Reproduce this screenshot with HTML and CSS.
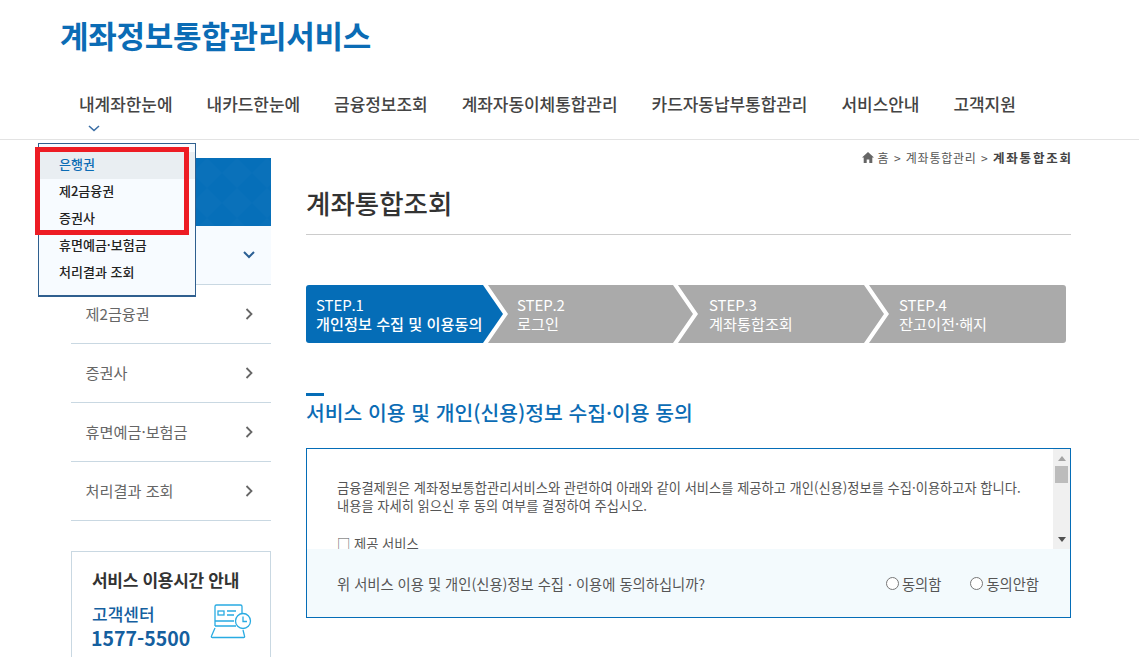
FILE: index.html
```html
<!DOCTYPE html>
<html lang="ko">
<head>
<meta charset="utf-8">
<title>계좌정보통합관리서비스</title>
<link rel="stylesheet" href="styles.css">
</head>
<body>
<header class="header">
  <div class="logo">계좌정보통합관리서비스</div>
  <nav class="gnb">
    <a class="gnb-item">내계좌한눈에</a>
    <a class="gnb-item">내카드한눈에</a>
    <a class="gnb-item">금융정보조회</a>
    <a class="gnb-item">계좌자동이체통합관리</a>
    <a class="gnb-item">카드자동납부통합관리</a>
    <a class="gnb-item">서비스안내</a>
    <a class="gnb-item">고객지원</a>
    <svg class="gnb-caret" width="12" height="7" viewBox="0 0 12 7"><path d="M1 1l5 4.5L11 1" fill="none" stroke="#3a6ea5" stroke-width="1.6"/></svg>
  </nav>
</header>
<div class="dropdown">
  <a class="dd-item dd-on">은행권</a>
  <a class="dd-item">제2금융권</a>
  <a class="dd-item">증권사</a>
  <a class="dd-item">휴면예금·보험금</a>
  <a class="dd-item">처리결과 조회</a>
</div>
<div class="redbox"></div>
<div class="body">
  <aside class="side">
    <svg class="side-head" width="200" height="68" viewBox="0 0 200 68">
      <defs>
        <pattern id="tri" width="30" height="30" patternUnits="userSpaceOnUse" x="1" y="0">
          <path d="M15 0L30 15 15 30 0 15z" fill="#fff" fill-opacity=".015"/>
        </pattern>
      </defs>
      <rect width="200" height="68" fill="#066fb9"/>
      <rect width="200" height="68" fill="url(#tri)"/>
    </svg>
    <ul class="side-list">
      <li class="side-item side-on"><span>은행권</span><svg width="12" height="8" viewBox="0 0 12 8"><path d="M1 1l5 5 5-5" fill="none" stroke="#2b5f94" stroke-width="2"/></svg></li>
      <li class="side-item"><span>제2금융권</span><svg width="8" height="12" viewBox="0 0 8 12"><path d="M1.500 1l5 5-5 5" fill="none" stroke="#666" stroke-width="1.800"/></svg></li>
      <li class="side-item"><span>증권사</span><svg width="8" height="12" viewBox="0 0 8 12"><path d="M1.500 1l5 5-5 5" fill="none" stroke="#666" stroke-width="1.800"/></svg></li>
      <li class="side-item"><span>휴면예금·보험금</span><svg width="8" height="12" viewBox="0 0 8 12"><path d="M1.500 1l5 5-5 5" fill="none" stroke="#666" stroke-width="1.800"/></svg></li>
      <li class="side-item"><span>처리결과 조회</span><svg width="8" height="12" viewBox="0 0 8 12"><path d="M1.500 1l5 5-5 5" fill="none" stroke="#666" stroke-width="1.800"/></svg></li>
    </ul>
    <div class="hours">
      <div class="hours-title">서비스 이용시간 안내</div>
      <div class="hours-row">
        <div>
          <div class="hours-label">고객센터</div>
          <div class="hours-tel">1577-5500</div>
        </div>
        <svg width="42" height="36" viewBox="0 0 42 36" fill="none" stroke="#29abe2" stroke-width="1.300"><path d="M5 23V3.500A1.500 1.500 0 0 1 6.500 2h24A1.500 1.500 0 0 1 32 3.500V10"/><rect x="8" y="8" width="6" height="4"/><path d="M17 8h9M17 12h7M5 18h19M5 23h21"/><path d="M5 25L1.500 33a1 1 0 0 0 1 1.500h31a1 1 0 0 0 1-1.500L33 27"/><circle cx="33" cy="18" r="7.500" fill="#fff"/><path d="M33 13.500V18.500h4"/></svg>
      </div>
    </div>
  </aside>
  <main class="main">
    <div class="crumb">
      <svg class="crumb-home" width="12" height="11" viewBox="0 0 12 11"><path d="M6 0L0 5.500h1.700V11h3V7.500h2.600V11h3V5.500H12z" fill="#666"/></svg>
      <span>홈</span><span class="crumb-sep">&gt;</span><span>계좌통합관리</span><span class="crumb-sep">&gt;</span><b>계좌통합조회</b>
    </div>
    <h1 class="page-title">계좌통합조회</h1>
    <ol class="steps">
      <li class="step step-first step-on"><span class="step-no">STEP.1</span><span>개인정보 수집 및 이용동의</span></li>
      <li class="step step-two"><span class="step-no">STEP.2</span><span>로그인</span></li>
      <li class="step step-three"><span class="step-no">STEP.3</span><span>계좌통합조회</span></li>
      <li class="step step-last"><span class="step-no">STEP.4</span><span>잔고이전·해지</span></li>
    </ol>
    <h2 class="section-title">서비스 이용 및 개인(신용)정보 수집·이용 동의</h2>
    <section class="agree">
      <div class="agree-scroll">
        <div class="agree-text">
          <p>금융결제원은 계좌정보통합관리서비스와 관련하여 아래와 같이 서비스를 제공하고 개인(신용)정보를 수집·이용하고자 합니다.<br>내용을 자세히 읽으신 후 동의 여부를 결정하여 주십시오.</p>
          <p class="agree-sub">□ 제공 서비스</p>
        </div>
        <div class="bar">
          <i class="bar-up"></i>
          <i class="bar-thumb"></i>
          <i class="bar-down"></i>
        </div>
      </div>
      <div class="agree-foot">
        <span class="agree-q">위 서비스 이용 및 개인(신용)정보 수집 · 이용에 동의하십니까?</span>
        <label class="radio"><i></i>동의함</label>
        <label class="radio"><i></i>동의안함</label>
      </div>
    </section>
  </main>
</div>
</body>
</html>
```
FILE: styles.css
```css
* { box-sizing: border-box; }
html, body { margin: 0; padding: 0; }
body { height: 657px; overflow: hidden; position: relative; background: #fff; color: #333; font-family: "Noto Sans CJK KR", "Noto Sans", sans-serif; }
a { color: inherit; text-decoration: none; }
ul, ol { list-style: none; margin: 0; padding: 0; }
.header { height: 140px; border-bottom: 1px solid #e3e3e3; padding: 14px 0 0 60px; }
.logo { font-size: 31px; line-height: 42px; font-weight: 700; color: #0b6cb5; letter-spacing: -.25px; }
.gnb { position: relative; display: flex; gap: 34px; padding: 33px 0 0 19px; }
.gnb-item { font-size: 17px; line-height: 30px; color: #444; font-weight: 500; letter-spacing: -.05px; }
.gnb-caret { position: absolute; left: 28px; top: 69px; }
.dropdown { position: absolute; left: 38px; top: 143px; width: 158px; height: 154px; border: 1px solid #2f5f8f; border-bottom-width: 2px; background: #f7fbff; padding-top: 8px; z-index: 2; }
.dd-item { display: block; height: 27px; line-height: 23px; padding-left: 20px; font-size: 13px; font-weight: 500; color: #222; }
.dd-on { background: #e9eef2; color: #0b6cb5; }
.redbox { position: absolute; left: 35px; top: 147px; width: 154px; height: 88px; border: 5px solid #ed1c24; z-index: 3; }
.body { display: flex; padding-left: 71px; }
.side { width: 200px; padding-top: 18px; }
.side-head { display: block; }
.side-item { height: 59px; display: flex; align-items: center; justify-content: space-between; padding: 0 18px 2px 14.500px; border-bottom: 1px solid #c9d8e2; font-size: 15.200px; color: #666; }
.side-item svg { margin-top: 2px; }
.side-on { background: #f7fbff; color: #0b6cb5; padding-right: 16px; }
.hours { margin-top: 30px; height: 130px; border: 1px solid #c9d8e2; padding: 13px 0 0 20px; }
.hours-title { font-size: 17px; line-height: 30px; font-weight: 700; color: #333; letter-spacing: -.3px; }
.hours-row { display: flex; justify-content: space-between; padding: 8px 18px 0 0; }
.hours-label { font-size: 17px; line-height: 22px; font-weight: 500; color: #15609f; }
.hours-tel { margin-left: -1px; font-size: 19.500px; line-height: 25px; font-weight: 700; color: #15609f; }
.main { width: 765px; margin-left: 35px; }
.crumb { display: flex; align-items: center; justify-content: flex-end; gap: 4.500px; height: 35px; padding-bottom: 0; font-size: 12px; letter-spacing: .75px; color: #555; margin-bottom: 1px; }
.crumb-home { margin-right: -.500px; }
.crumb b { color: #444; letter-spacing: 1.800px; font-size: 12.500px; margin-right: -1.800px; }
.crumb-sep { font-size: 12px; }
.page-title { margin: 0; height: 59px; padding-top: 8px; border-bottom: 1px solid #ccc; font-size: 26.500px; line-height: 38px; font-weight: 500; color: #333; }
.steps { display: flex; margin-top: 50px; width: 760px; }
.step { display: flex; flex-direction: column; justify-content: center; height: 58px; background: #aaa; color: #fff; font-size: 15.200px; line-height: 18px; margin-left: -15px; }
.step-no { font-size: 15px; font-weight: 400; letter-spacing: -.1px; }
.step-first { margin-left: 0; width: 197px; padding-left: 10px; background: #056db7; font-weight: 500; border-radius: 3px 0 0 3px; clip-path: polygon(0 0, 177px 0, 100% 50%, 177px 100%, 0 100%); position: relative; z-index: 1; }
.step-two { width: 205px; padding-left: 29px; clip-path: polygon(0 0, 185px 0, 100% 50%, 185px 100%, 0 100%, 20px 50%); }
.step-three { width: 206px; padding-left: 31px; clip-path: polygon(0 0, 186px 0, 100% 50%, 186px 100%, 0 100%, 20px 50%); }
.step-last { flex: 1; padding-left: 30px; border-radius: 0 3px 3px 0; clip-path: polygon(0 0, 100% 0, 100% 100%, 0 100%, 20px 50%); }
.section-title { position: relative; margin: 50px 0 0; padding-top: 1px; height: 52px; font-size: 20.400px; line-height: 36px; font-weight: 500; color: #0b6cb5; }
.section-title::before { content: ""; position: absolute; left: 0; top: 0; width: 18px; height: 3px; background: #056db7; }
.agree { margin-top: 3px; height: 170px; border: 1px solid #056db7; display: flex; flex-direction: column; }
.agree-scroll { flex: 1; min-height: 0; display: flex; overflow: hidden; }
.agree-text { flex: 1; padding: 30px 0 0 30px; font-size: 13.250px; line-height: 18px; color: #555; overflow: hidden; }
.agree-text p { margin: 0; }
.agree-sub { margin-top: 20px !important; }
.bar { width: 17px; background: #f0f0f0; display: flex; flex-direction: column; align-items: center; position: relative; }
.bar-up { margin-top: 7px; width: 0; height: 0; border: 4px solid transparent; border-top: 0; border-bottom: 5px solid #a3a3a3; }
.bar-thumb { margin-top: 5px; width: 13px; height: 17px; background: #bcbcbc; }
.bar-down { margin-top: auto; margin-bottom: 7px; width: 0; height: 0; border: 4px solid transparent; border-bottom: 0; border-top: 5px solid #505050; }
.agree-foot { height: 68px; flex: none; background: #f3fafd; display: flex; align-items: center; padding: 0 31px 0 30px; font-size: 14.300px; color: #555; }
.agree-q { flex: 1; }
.radio { display: flex; align-items: center; gap: 3px; margin-left: 29px; }
.radio i { width: 13px; height: 13px; border: 1px solid #777; border-radius: 50%; background: #fff; }
```
